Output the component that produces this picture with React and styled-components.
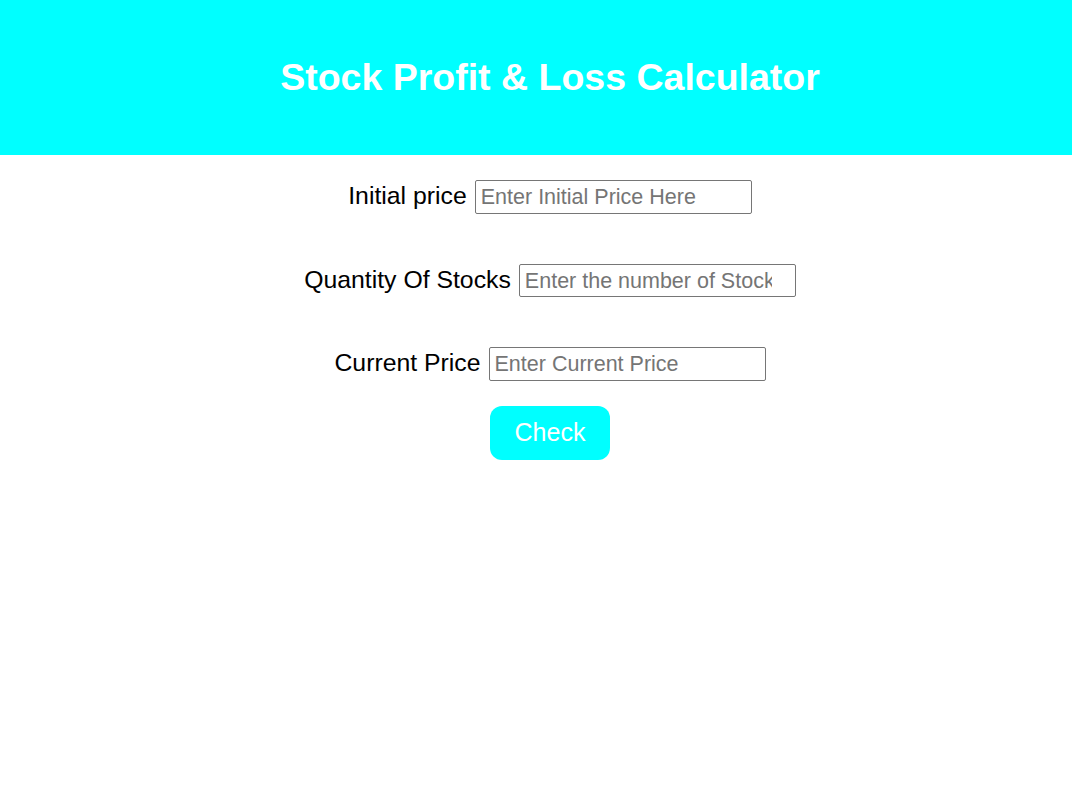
import React from "react";
import styled, { createGlobalStyle } from "styled-components";

const Global = createGlobalStyle`
  html, body { margin: 0; padding: 0; background: #ffffff; }
  body { font-family: "Liberation Sans", Arial, sans-serif; }
  * { box-sizing: border-box; }
`;

const Header = styled.header`
  background: #00ffff;
  height: 155px;
  display: flex;
  align-items: center;
  justify-content: center;
  padding-left: 28px;
`;

const Title = styled.h1`
  margin: 0;
  color: #ffffff;
  font-size: 37.5px;
  font-weight: 700;
  line-height: 1;
`;

const Form = styled.main`
  display: flex;
  flex-direction: column;
  align-items: center;
  padding: 25px 0 0 28px;
`;

const Row = styled.div`
  display: flex;
  align-items: center;
  gap: 8px;
  height: 33.5px;
  margin-bottom: ${(p) => p.$mb}px;
`;

const Label = styled.label`
  font-size: 24.8px;
  color: #000000;
  line-height: 1;
`;

const Input = styled.input`
  width: 277px;
  height: 33.5px;
  border: 1px solid #767676;
  border-radius: 2px;
  padding: 2px 23px 0 5px;
  font-family: "Liberation Sans", Arial, sans-serif;
  font-size: 21.5px;
  color: #000;
  outline: none;
  &::placeholder { color: #757575; }
`;

const Button = styled.button`
  width: 120px;
  height: 54px;
  background: #00ffff;
  color: #ffffff;
  border: none;
  border-radius: 12px;
  font-family: "Liberation Sans", Arial, sans-serif;
  font-size: 25px;
  cursor: pointer;
`;

export default function App() {
  return (
    <>
      <Global />
      <Header>
        <Title>Stock Profit &amp; Loss Calculator</Title>
      </Header>
      <Form>
        <Row $mb={50}>
          <Label>Initial price</Label>
          <Input placeholder="Enter Initial Price Here" />
        </Row>
        <Row $mb={50}>
          <Label>Quantity Of Stocks</Label>
          <Input placeholder="Enter the number of Stocks" />
        </Row>
        <Row $mb={25}>
          <Label>Current Price</Label>
          <Input placeholder="Enter Current Price" />
        </Row>
        <Button>Check</Button>
      </Form>
    </>
  );
}
